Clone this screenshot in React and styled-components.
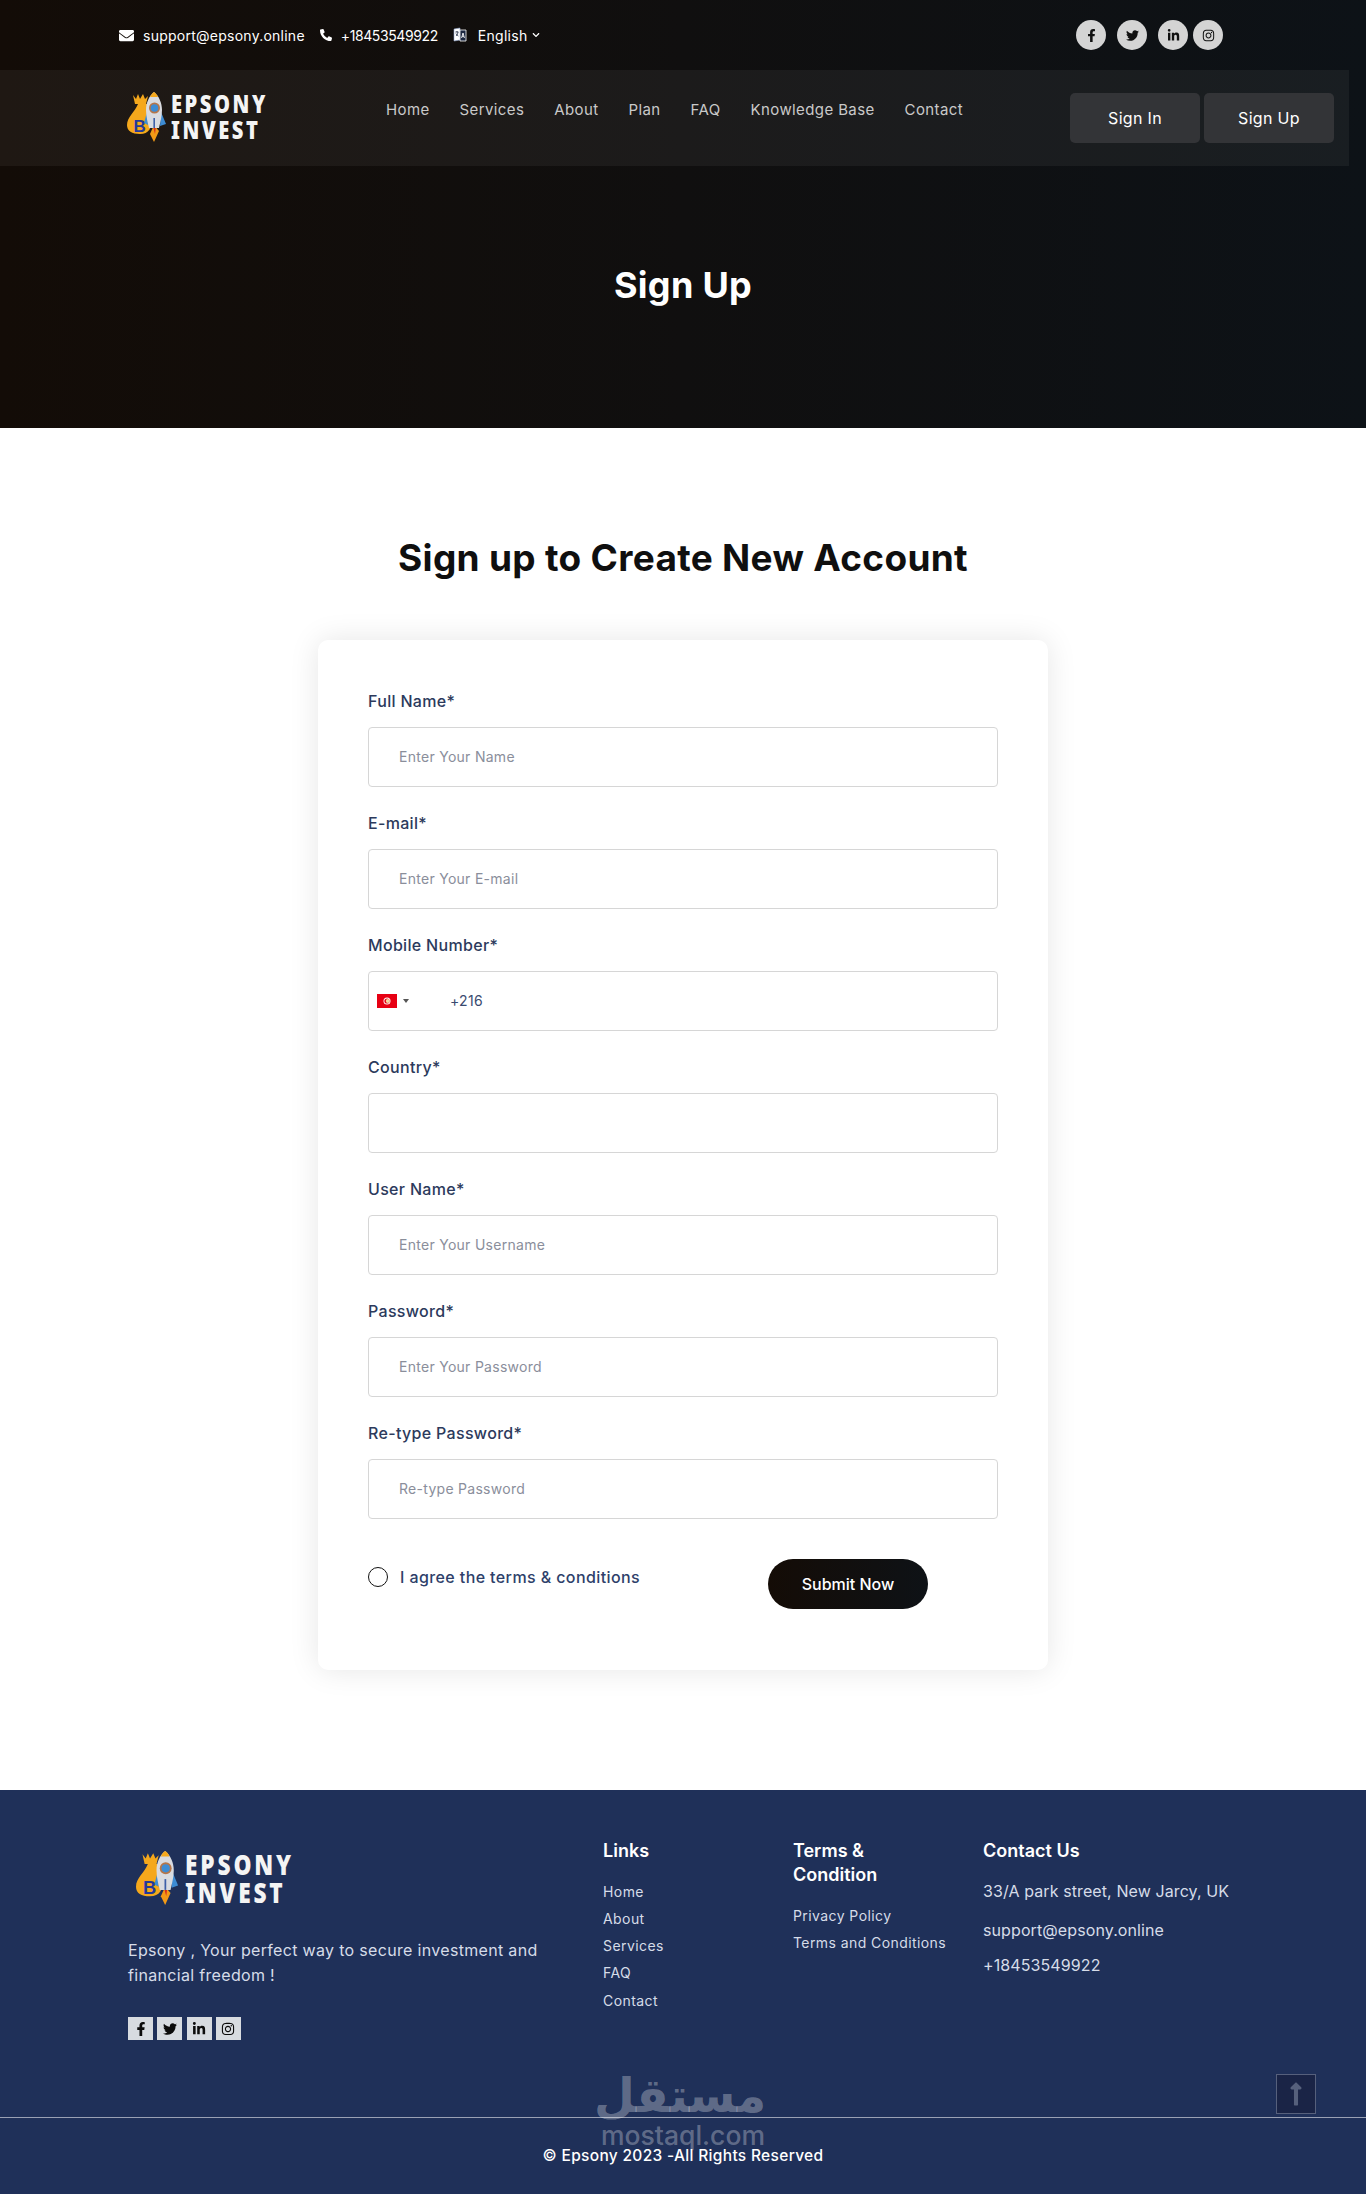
import React from "react";
import styled, { createGlobalStyle } from "styled-components";
import { FaEnvelope, FaPhoneAlt, FaFacebookF, FaTwitter, FaLinkedinIn, FaInstagram, FaLongArrowAltUp, FaChevronDown } from "react-icons/fa";

const Global = createGlobalStyle`
  * { box-sizing: border-box; }
  body { margin: 0; background: #fff; font-family: Inter, "Noto Sans", "Liberation Sans", sans-serif; letter-spacing: .02em; }
  a { color: inherit; text-decoration: none; }
  ul { list-style: none; margin: 0; padding: 0; }
`;

const Page = styled.div`
  position: relative;
  width: 1366px;
  height: 2194px;
  overflow: hidden;
`;

const Hero = styled.header`
  height: 428px;
  background: linear-gradient(90deg, #130c07 0%, #0d1217 100%);
`;

const TopBar = styled.div`
  height: 70px;
  display: flex;
  align-items: center;
  justify-content: space-between;
  padding: 0 143px 0 119px;
`;

const Contacts = styled.div`
  display: flex;
  align-items: center;
  color: #fff;
  font-size: 14px;
  letter-spacing: .25px;
`;

const ContactItem = styled.span`
  display: flex;
  align-items: center;
  gap: 9px;
  margin-right: 15px;
  letter-spacing: ${p => p.$track || ".25px"};
  svg { flex: none; }
`;

const Language = styled.span`
  display: flex;
  align-items: center;
  gap: 11px;
  letter-spacing: .02em;
`;

const LangLabel = styled.span`
  display: flex;
  align-items: center;
  gap: 4px;
`;

const RoundSocials = styled.div`
  display: flex;
  gap: 11px;
`;

const RoundSocial = styled.a`
  width: 30px;
  height: 30px;
  border-radius: 50%;
  background: #d4d4d4;
  color: #111;
  display: flex;
  align-items: center;
  justify-content: center;
  font-size: 13px;
  &:last-child { margin-left: -6px; }
`;

const NavBar = styled.nav`
  height: 96px;
  width: 1349px;
  display: flex;
  align-items: center;
  padding: 0 15px 0 127px;
  background: rgba(255, 255, 255, .05);
`;

const NavLinks = styled.ul`
  display: flex;
  gap: 30px;
  margin: 0 0 17px 120px;
  color: #c9c9c9;
  font-size: 15px;
  font-weight: 400;
  letter-spacing: .026em;
`;

const AuthButtons = styled.div`
  display: flex;
  gap: 4px;
  margin-left: auto;
`;

const AuthButton = styled.a`
  width: 130px;
  height: 50px;
  border-radius: 5px;
  background: #333437;
  color: #fff;
  font-size: 16px;
  display: flex;
  align-items: center;
  justify-content: center;
`;

const HeroTitle = styled.h1`
  margin: 97px 0 0;
  text-align: center;
  color: #fff;
  font-size: 36px;
  line-height: 44px;
  font-weight: 700;
  letter-spacing: .3px;
`;

const LogoWrap = styled.div`
  display: flex;
  align-items: center;
  gap: ${p => p.$gap}px;
  margin: ${p => p.$top}px 0 0 ${p => p.$left}px;
`;

const LogoText = styled.div`
  width: ${p => p.$width}px;
  color: #f4f4f4;
  font-family: "Noto Sans", "Liberation Sans", sans-serif;
  font-weight: 900;
  font-size: ${p => p.$size}px;
  line-height: ${p => p.$line}px;
  letter-spacing: ${p => p.$track}px;
  white-space: nowrap;
  transform: scaleX(${p => p.$squeeze});
  transform-origin: left center;
`;

const LogoMark = ({ height }) => (
  <svg width={height * 0.78} height={height} viewBox="0 0 39 50" aria-hidden="true">
    <path d="M6 3l3 4 2-5 2 5 3-5 2 5 3-3-2 8h-11z" fill="#f5a81c" />
    <path d="M11 12h10c2 5 4 8 4 14 0 10-3 16-12 16-8 0-13-3-13-9 0-8 8-13 11-21z" fill="#f5a81c" />
    <path d="M27 33l5 6-5 11-4-8z" fill="#f29a16" />
    <path d="M26 34h3l-1 8z" fill="#d52b1e" />
    <path d="M20 20l-3 11 4 2zM34 20l5 12-6 2z" fill="#3d8cd4" />
    <path d="M27 0c5 4 8 11 8 18 0 7-2 13-3 18h-10c-1-5-3-11-3-18 0-7 3-14 8-18z" fill="#d9dbe0" />
    <path d="M27 0c2 1 3 3 4 5h-8c1-2 2-4 4-5z" fill="#f5a81c" />
    <circle cx="27.5" cy="16" r="5.5" fill="#b5764a" />
    <circle cx="27.5" cy="16" r="3.8" fill="#3d8cd4" />
    <rect x="26.4" y="26" width="1.6" height="10" fill="#3d5fa8" />
    <text x="6.5" y="40" fontSize="17" fontWeight="900" fill="#23399a" fontFamily="Liberation Sans, sans-serif">B</text>
  </svg>
);

const Logo = ({ height, left, top, gap, size, line, track, width, squeeze }) => (
  <LogoWrap $left={left} $top={top} $gap={gap}>
    <LogoMark height={height} />
    <LogoText $size={size} $line={line} $track={track} $width={width} $squeeze={squeeze}>EPSONY<br />INVEST</LogoText>
  </LogoWrap>
);

const Main = styled.main`
  padding: 108px 0 120px;
`;

const Heading = styled.h2`
  margin: 0 0 60px;
  text-align: center;
  color: #0f0f0f;
  font-size: 37px;
  line-height: 44px;
  font-weight: 700;
  letter-spacing: .3px;
`;

const Card = styled.form`
  width: 730px;
  margin: 0 auto;
  padding: 50px 50px 61px;
  background: #fff;
  border-radius: 10px;
  box-shadow: 0 0 30px rgba(0, 0, 0, .1);
`;

const Field = styled.div`
  margin-bottom: 25px;
`;

const Label = styled.label`
  display: block;
  height: 23px;
  line-height: 23px;
  margin-bottom: 14px;
  color: #2c3a5c;
  font-size: 16px;
  font-weight: 500;
`;

const Input = styled.input`
  display: block;
  width: 100%;
  height: 60px;
  padding: 0 30px 2px;
  border: 1px solid #d6d6d6;
  border-radius: 4px;
  background: #fff;
  font: inherit;
  font-size: 14px;
  letter-spacing: .02em;
  &::placeholder { color: #8a8e9b; opacity: 1; }
`;

const PhoneBox = styled.div`
  height: 60px;
  display: flex;
  align-items: center;
  padding-left: 8px;
  border: 1px solid #d6d6d6;
  border-radius: 4px;
`;

const Caret = styled.span`
  margin-left: 6px;
  border-left: 3px solid transparent;
  border-right: 3px solid transparent;
  border-top: 4px solid #555;
`;

const DialCode = styled.span`
  margin: 0 0 2px 41px;
  color: #3a4a6f;
  font-size: 14px;
`;

const AgreeRow = styled.div`
  display: flex;
  align-items: flex-start;
  margin-top: 40px;
`;

const Agree = styled.label`
  display: flex;
  align-items: center;
  gap: 12px;
  width: 400px;
  margin-top: 8px;
  color: #2e3f6a;
  font-size: 16px;
  font-weight: 500;
  line-height: 20px;
  letter-spacing: .025em;
`;

const Radio = styled.span`
  flex: none;
  width: 20px;
  height: 20px;
  border: 1px solid #111;
  border-radius: 50%;
`;

const Submit = styled.button`
  width: 160px;
  height: 50px;
  border: 0;
  border-radius: 25px;
  padding-bottom: 2px;
  background: linear-gradient(90deg, #140c06, #0e1216);
  color: #fff;
  font: inherit;
  font-size: 16px;
  font-weight: 500;
`;

const Footer = styled.footer`
  position: relative;
  height: 404px;
  background: #1f3059;
  color: #d6dce8;
`;

const FooterGrid = styled.div`
  height: 327px;
  padding: 49px 0 0 128px;
  display: grid;
  grid-template-columns: 475px 190px 190px 1fr;
  align-items: start;
`;

const About = styled.p`
  margin: 32px 0 29px;
  width: 440px;
  font-size: 16px;
  line-height: 25px;
`;

const SquareSocials = styled.div`
  display: flex;
  gap: 4.3px;
`;

const SquareSocial = styled.a`
  width: 25px;
  height: 23px;
  background: #d7dbe0;
  color: #0b0b0b;
  display: flex;
  align-items: center;
  justify-content: center;
  font-size: 14px;
`;

const ColumnTitle = styled.h4`
  margin: -12px 0 14.5px;
  color: #fff;
  font-size: 18px;
  line-height: 24px;
  font-weight: 600;
  letter-spacing: 0;
`;

const Column = styled.div`
  padding-top: 12px;
`;

const FooterLink = styled.li`
  font-size: 14px;
  line-height: 27.3px;
  letter-spacing: .03em;
`;

const ContactLine = styled.div`
  font-size: 16px;
  line-height: 27.3px;
  letter-spacing: .1px;
  margin-bottom: ${p => p.$after}px;
  h4 + & { margin-top: 1px; }
`;

const Rule = styled.hr`
  margin: 0;
  border: 0;
  height: 1px;
  background: rgba(255, 255, 255, .55);
`;

const Copyright = styled.div`
  padding-top: 26px;
  text-align: center;
  color: #fff;
  font-size: 15.5px;
  line-height: 24px;
  font-weight: 500;
`;

const Watermark = styled.div`
  position: absolute;
  left: 600px;
  top: 278px;
  width: 166px;
  text-align: center;
  color: rgba(255, 255, 255, .3);
  pointer-events: none;
`;

const WatermarkArabic = styled.div`
  font-family: "DejaVu Sans", sans-serif;
  font-weight: 700;
  font-size: 47px;
  line-height: 56px;
  letter-spacing: 0;
  direction: rtl;
`;

const WatermarkLatin = styled.div`
  font-size: 26.5px;
  line-height: 22px;
  font-weight: 500;
  letter-spacing: 0;
`;

const ScrollTop = styled.a`
  position: absolute;
  right: 50px;
  top: 284px;
  width: 40px;
  height: 40px;
  background: #1a2446;
  border: 1px solid #56607c;
  color: #56607c;
  display: flex;
  align-items: center;
  justify-content: center;
  font-size: 26px;
`;

const TranslateIcon = () => (
  <svg width="14" height="16" viewBox="0 0 14 16" aria-hidden="true">
    <path d="M1 2l6-1v12l-6 1z" fill="#fff" stroke="#8fa3c9" strokeWidth=".6" />
    <path d="M7 3h6v11H7z" fill="#1c2740" stroke="#fff" strokeWidth=".8" />
    <path d="M8.600 11l1.400-5 1.400 5M9.200 9.400h1.600" fill="none" stroke="#fff" strokeWidth=".9" />
    <path d="M2.400 5h3M4 4v1M3 9c1.200-1 1.800-2.400 2-4M3 6.500c.6 1.200 1.400 2 2.400 2.500" fill="none" stroke="#1c2740" strokeWidth=".8" />
  </svg>
);

const TunisiaFlag = () => (
  <svg width="20" height="14" viewBox="0 0 20 14" aria-hidden="true">
    <rect width="20" height="14" fill="#e70013" />
    <circle cx="10" cy="7" r="3.500" fill="#fff" />
    <circle cx="10" cy="7" r="2.600" fill="#e70013" />
    <circle cx="10.800" cy="7" r="2" fill="#f3d9a0" />
  </svg>
);

const navItems = ["Home", "Services", "About", "Plan", "FAQ", "Knowledge Base", "Contact"];
const socials = [FaFacebookF, FaTwitter, FaLinkedinIn, FaInstagram];
const fields = [
  ["Full Name*", "Enter Your Name"],
  ["E-mail*", "Enter Your E-mail"],
  ["Mobile Number*", null],
  ["Country*", ""],
  ["User Name*", "Enter Your Username"],
  ["Password*", "Enter Your Password"],
  ["Re-type Password*", "Re-type Password"],
];
const footerLinks = ["Home", "About", "Services", "FAQ", "Contact"];

export default function App() {
  return (
    <Page>
      <Global />
      <Hero>
        <TopBar>
          <Contacts>
            <ContactItem><FaEnvelope size={15} />support@epsony.online</ContactItem>
            <ContactItem $track="-.4px"><FaPhoneAlt size={12} />+18453549922</ContactItem>
            <Language>
              <TranslateIcon />
              <LangLabel>English <FaChevronDown size={8} /></LangLabel>
            </Language>
          </Contacts>
          <RoundSocials>
            {socials.map((Icon, i) => <RoundSocial key={i} href="#"><Icon /></RoundSocial>)}
          </RoundSocials>
        </TopBar>
        <NavBar>
          <Logo height={50} left={0} top={-3} gap={5} size={24} line={26} track={3} width={95} squeeze={0.84} />
          <NavLinks>
            {navItems.map(n => <li key={n}><a href="#">{n}</a></li>)}
          </NavLinks>
          <AuthButtons>
            <AuthButton href="#">Sign In</AuthButton>
            <AuthButton href="#">Sign Up</AuthButton>
          </AuthButtons>
        </NavBar>
        <HeroTitle>Sign Up</HeroTitle>
      </Hero>

      <Main>
        <Heading>Sign up to Create New Account</Heading>
        <Card>
          {fields.map(([label, placeholder]) => (
            <Field key={label}>
              <Label>{label}</Label>
              {placeholder === null ? (
                <PhoneBox>
                  <TunisiaFlag />
                  <Caret />
                  <DialCode>+216</DialCode>
                </PhoneBox>
              ) : (
                <Input placeholder={placeholder} />
              )}
            </Field>
          ))}
          <AgreeRow>
            <Agree><Radio />I agree the terms &amp; conditions</Agree>
            <Submit type="button">Submit Now</Submit>
          </AgreeRow>
        </Card>
      </Main>

      <Footer>
        <FooterGrid>
          <div>
            <Logo height={54} left={8} top={11} gap={7} size={28} line={28} track={3.5} width={107} squeeze={0.81} />
            <About>Epsony , Your perfect way to secure investment and financial freedom !</About>
            <SquareSocials>
              {socials.map((Icon, i) => <SquareSocial key={i} href="#"><Icon /></SquareSocial>)}
            </SquareSocials>
          </div>
          <Column>
            <ColumnTitle>Links</ColumnTitle>
            <ul>{footerLinks.map(l => <FooterLink key={l}>{l}</FooterLink>)}</ul>
          </Column>
          <Column>
            <ColumnTitle>Terms &amp;<br />Condition</ColumnTitle>
            <ul>
              <FooterLink>Privacy Policy</FooterLink>
              <FooterLink>Terms and Conditions</FooterLink>
            </ul>
          </Column>
          <Column>
            <ColumnTitle>Contact Us</ColumnTitle>
            <ContactLine $after={12.7}>33/A park street, New Jarcy, UK</ContactLine>
            <ContactLine $after={7.7}>support@epsony.online</ContactLine>
            <ContactLine $after={0}>+18453549922</ContactLine>
          </Column>
        </FooterGrid>
        <Rule />
        <Copyright>© Epsony 2023 -All Rights Reserved</Copyright>
        <Watermark>
          <WatermarkArabic>مستقل</WatermarkArabic>
          <WatermarkLatin>mostaql.com</WatermarkLatin>
        </Watermark>
        <ScrollTop href="#"><FaLongArrowAltUp /></ScrollTop>
      </Footer>
    </Page>
  );
}
